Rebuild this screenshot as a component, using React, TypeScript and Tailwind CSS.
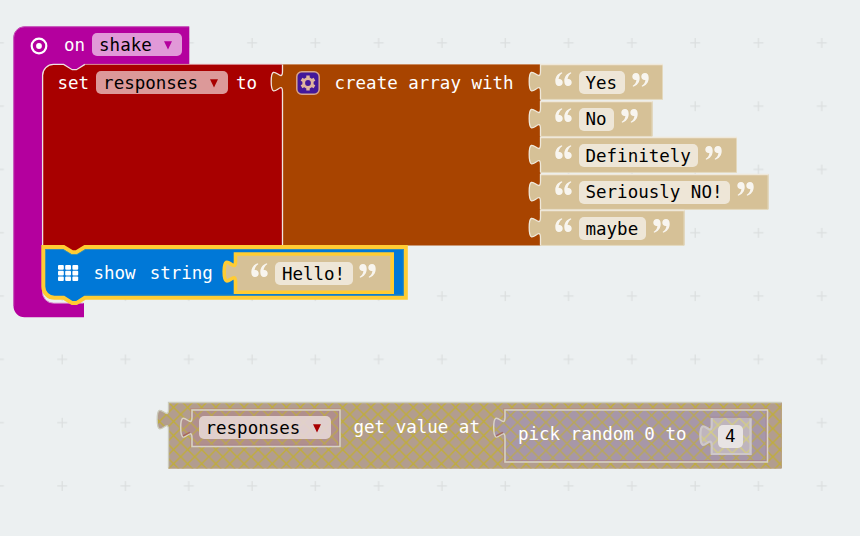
import type { ReactNode } from "react";

const TAB = "c 0,-14.1 -11.3,11.3 -11.3,-10.6 s 11.3,3.5 11.3,-10.6";
const NOTCH = "l 8.5,5.3 4.2,0 8.5,-5.3";
const NOTCH_BACK = "l -8.5,5.3 -4.2,0 -8.5,-5.3";

function Outline({ children }: { children: ReactNode }) {
  return <svg className="pointer-events-none absolute left-0 top-0 h-px w-px overflow-visible">{children}</svg>;
}

function Caret({ color }: { color: string }) {
  return (
    <svg width="10" height="9" viewBox="0 0 10 9" className="block shrink-0">
      <path d="M1 0.3 H9 L5 8.5 Z" fill={color} />
    </svg>
  );
}

function Quote({ close = false }: { close?: boolean }) {
  const d = "M7 0.3 C3 1.3 0.3 4.6 0.3 9 C0.3 12.3 1.6 14 4 14 C6.3 14 7.7 12.5 7.7 10.4 C7.7 8.3 6.3 7 4.4 7 C4.1 7 3.8 7 3.6 7.1 C3.9 4.4 5.2 2.5 7.3 1.2 Z";
  return (
    <svg width="17" height="15" viewBox="0 0 17 15" className={close ? "block shrink-0 rotate-180 opacity-85" : "block shrink-0 opacity-85"}>
      <path d={d} fill="#fff" />
      <path d={d} fill="#fff" transform="translate(9 0)" />
    </svg>
  );
}

function Field({ text, tone, caret }: { text: string; tone: string; caret?: string }) {
  return (
    <div className={`flex h-[23px] shrink-0 items-center rounded-[5px] pl-[7px] pt-px text-black ${caret ? "pr-[9px]" : "pr-[7.5px]"} ${tone}`}>
      <span>{text}</span>
      {caret && (
        <span className="ml-[11.5px]">
          <Caret color={caret} />
        </span>
      )}
    </div>
  );
}

function StringBlock({ text, width }: { text: string; width: number }) {
  return (
    <div className="relative h-[36.6px]" style={{ width }}>
      <Outline>
        <path d={`M0.5 0.3 H${width} V35.2 H0.5 V28.2 ${TAB} Z`} fill="#d6c197" />
        <path d={`M0.5 35.4 H${width - 0.5} V0.5`} fill="none" stroke="#e3d8bd" />
        <path d={`M0.5 35.2 V28.2 ${TAB} V0.5 H${width}`} fill="none" stroke="#efe8da" strokeWidth="1.3" />
      </Outline>
      <div className="relative flex items-start gap-[7px] pl-[14.5px] pt-[7.1px]">
        <span className="pt-[0.5px]"><Quote /></span>
        <Field text={text} tone="bg-[#eee6d7]" />
        <span className="pt-[0.5px]"><Quote close /></span>
      </div>
    </div>
  );
}

const answers = [
  { text: "Yes", width: 123 },
  { text: "No", width: 112.5 },
  { text: "Definitely", width: 197 },
  { text: "Seriously NO!", width: 228.5 },
  { text: "maybe", width: 144.5 },
];

function SetBlock() {
  return (
    <div className="relative flex h-[183px]">
      <Outline>
        <path d={`M0.5 182 V11.3 A11 11 0 0 1 11.5 0.3 H21.7 ${NOTCH} H240 V182 H42.9 ${NOTCH_BACK} Z`} fill="#a80000" />
        <path d={`M0.6 182 V11.3 A11 11 0 0 1 11.5 0.4 H21.7 ${NOTCH}`} fill="none" stroke="#f0dfe4" strokeWidth="1.3" />
        <path d="M43 0.4 H240" stroke="#d98a92" />
        <path d={`M21.7 180 H42.9 V183 ${NOTCH_BACK} Z`} fill="#a80000" />
      </Outline>
      <div className="relative flex w-[240px] items-start gap-[7px] pl-[15.5px] pt-[7px]">
        <span className="mt-[0.6px]">set</span>
        <Field text="responses" tone="bg-[#dc9999]" caret="#a80000" />
        <span className="ml-[0.5px] mt-[0.6px]">to</span>
      </div>
      <div className="relative w-[258px] shrink-0">
        <Outline>
          <path d={`M0.5 0.3 H258.5 V181.6 H0.5 V28.2 ${TAB} Z`} fill="#a84400" />
          <path d="M0 0.5 H258" stroke="#c98a60" />
          <path d={`M0.5 181.5 V28.2 ${TAB} V0.5`} fill="none" stroke="#f1e4de" strokeWidth="1.3" />
        </Outline>
        <div className="relative flex items-start pl-[14.5px] pt-[7px]">
          <svg width="24" height="24" viewBox="0 0 24 24" className="-ml-[0.5px] block shrink-0">
            <rect x="0.8" y="0.8" width="22.4" height="22.4" rx="5" fill="#43189a" stroke="#d8a58a" strokeWidth="1.5" />
            <circle cx="12" cy="12" r="4.3" fill="none" stroke="#dfb69f" strokeWidth="2.8" />
            <path d="M12 4.5 V7 M12 17 V19.5 M5.5 8.25 L7.7 9.5 M16.3 14.5 L18.5 15.75 M5.5 15.75 L7.7 14.5 M16.3 9.5 L18.5 8.25" stroke="#dfb69f" strokeWidth="3.4" />
          </svg>
          <span className="ml-[14.5px] mt-[0.6px]">create array with</span>
        </div>
      </div>
      <div className="flex flex-col">
        {answers.map((a) => (
          <StringBlock key={a.text} text={a.text} width={a.width} />
        ))}
      </div>
    </div>
  );
}

function ShowStringBlock() {
  return (
    <div className="relative flex h-[51px] w-[363px] items-start pl-[16px] pt-[14.5px]">
      <Outline>
        <path
          d={`M1.3 0 H21.7 ${NOTCH} H363.8 V50.8 H42.9 ${NOTCH_BACK} H12.5 A11.2 11.2 0 0 1 1.3 39.6 Z`}
          fill="#0078d7"
          stroke="#ffcc33"
          strokeWidth="4"
        />
        <path d="M3.8 2.5 H21.2 l8.3,5 5.6,0 8.3,-5 H361.3 V48.2 H43.2" fill="none" stroke="#3f93b0" strokeWidth="0.8" />
      </Outline>
      <svg width="21" height="17" viewBox="0 0 21 17" className="relative mt-[3px] block shrink-0">
        {[0, 7.2, 14.4].map((x) =>
          [0, 5.7, 11.4].map((y) => <rect key={`${x}-${y}`} x={x} y={y} width="5.8" height="4.7" rx="1" fill="#fff" />)
        )}
      </svg>
      <span className="relative ml-[14.5px]">show</span>
      <span className="relative ml-[14px]">string</span>
      <div className="relative -mt-[7.5px] ml-[22.5px] h-[38.5px] w-[157px] shrink-0">
        <Outline>
          <path d={`M0.5 0 H157.2 V38.3 H0.5 V28.2 ${TAB} Z`} fill="#d6c197" stroke="#ffcc33" strokeWidth="3.6" />
        </Outline>
        <div className="relative flex items-start gap-[6.5px] pl-[16px] pt-[8.4px]">
          <span className="pt-px"><Quote /></span>
          <Field text="Hello!" tone="bg-[#eee6d7]" />
          <span className="pt-px"><Quote close /></span>
        </div>
      </div>
    </div>
  );
}

function EventStack() {
  return (
    <div className="absolute left-[13px] top-[26px] flex flex-col">
      <Outline>
        <path
          d="M0.5 11.5 A11 11 0 0 1 11.5 0.5 H176.3 V38.3 H72 V46 H46 L40.5 38.3 A11 11 0 0 0 29.5 49.5 V265.5 A11 11 0 0 0 40.5 277 H71 V291.3 H11.5 A11 11 0 0 1 0.5 280.3 Z"
          fill="#b4009e"
        />
        <path d="M0.7 280 V11.5 A11 11 0 0 1 11.5 0.7 H176" fill="none" stroke="#c75cba" />
        <path d="M29.5 265 A11 11 0 0 0 40.5 277.2 H70.5" fill="none" stroke="#d98fd0" />
      </Outline>
      <div className="relative flex h-[38px] items-start pl-[17px] pt-[7px]">
        <svg width="18" height="18" viewBox="0 0 18 18" className="mt-[4px] block shrink-0">
          <circle cx="9" cy="9" r="7.3" fill="none" stroke="#fff" strokeWidth="2.2" />
          <circle cx="9" cy="9" r="2.9" fill="#fff" />
        </svg>
        <span className="ml-[16px] mr-[7px] mt-[0.6px]">on</span>
        <Field text="shake" tone="bg-[#e199d8]" caret="#b4009e" />
      </div>
      <div className="ml-[29px] flex flex-col">
        <SetBlock />
        <ShowStringBlock />
      </div>
    </div>
  );
}

function Raised({ width, height, fill, children, className }: { width: number; height: number; fill: string; children: ReactNode; className: string }) {
  const d = `M0 0 H${width} V${height} H0 V28.2 ${TAB} Z`;
  return (
    <div className={`relative shrink-0 ${className}`} style={{ width, height }}>
      <Outline>
        <path d={d} fill={fill} />
        <path d={d} fill="url(#hatch)" opacity="0.75" />
        <path d={`M-1.5 ${height + 1} V29 M-1.5 8 V-1.5 H${width + 1}`} fill="none" stroke="#b8877a" opacity="0.6" />
        <path d={`M1.2 ${height - 1.3} H${width - 1.3} V1`} fill="none" stroke="#a77f91" opacity="0.8" />
        <path d={d} fill="none" stroke="#d9d3c6" strokeWidth="1.5" />
        <path d="M-9 26 L-2 22.3" stroke="#a4594e" strokeWidth="1.5" opacity="0.75" />
      </Outline>
      <div className="relative">{children}</div>
    </div>
  );
}

function LooseValueBlock() {
  return (
    <div className="absolute left-[168px] top-[402px] flex h-[66px] w-[613.5px] items-start pl-[24px]">
      <Outline>
        <path d={`M0.5 0.3 H613.8 V66.5 H0.5 V28.2 ${TAB} Z`} fill="#b29d8f" />
        <path d={`M0.5 0.3 H613.8 V66.5 H0.5 V28.2 ${TAB} Z`} fill="url(#hatch)" />
        <path d={`M0.5 66 V28.2 ${TAB} V0.5 H613.5`} fill="none" stroke="#cbcbbb" strokeWidth="1.3" />
        <path d="M0.5 66 H613.3 V1" fill="none" stroke="#b9a078" />
      </Outline>
      <Raised width={148} height={36.5} fill="#b08f8d" className="mt-[8.4px]">
        <div className="flex pl-[6.5px] pt-[6.1px]">
          <Field text="responses" tone="bg-[#e6d6d5]/90" caret="#a80000" />
        </div>
      </Raised>
      <span className="relative ml-[13.5px] mt-[14px]">get value at</span>
      <Raised width={262.5} height={52} fill="#a797a8" className="ml-[25px] mt-[8.4px]">
        <div className="flex items-start pl-[13px]">
          <span className="mt-[13.1px]">pick random 0 to</span>
          <div className="relative ml-[24.5px] mt-[8px] flex h-[37px] w-[40.5px] shrink-0 pl-[7px] pt-[6.2px]">
            <Outline>
              <path d={`M0 0 H40.5 V37 H0 V28.2 ${TAB} Z`} fill="#bfb5bd" />
              <path d={`M0 0 H40.5 V37 H0 V28.2 ${TAB} Z`} fill="url(#hatchPale)" />
              <path d="M-1 -1 H41" stroke="#a68da1" />
              <path d={`M0.7 37 V28.2 ${TAB} V0 M0 36 H39.5 V0.5`} fill="none" stroke="#cec8ca" strokeWidth="2.2" />
            </Outline>
            <div className="relative">
              <Field text="4" tone="bg-[#e8e4e4]" />
            </div>
          </div>
        </div>
      </Raised>
    </div>
  );
}

export default function App() {
  return (
    <main className="relative h-[536px] w-[860px] overflow-hidden bg-[#ecf0f1] font-['DejaVu_Sans_Mono',monospace] text-[17.5px] leading-[23px] whitespace-pre text-white">
      <svg width="860" height="536" className="absolute inset-0">
        <defs>
          <pattern id="dots" x="-33" y="-52" width="63.3" height="63.3" patternUnits="userSpaceOnUse">
            <path d="M26.9 31.6 H36.9 M31.9 26.6 V36.6" stroke="#dcdfe0" strokeWidth="1.3" />
          </pattern>
          <pattern id="hatch" x="-1.5" y="-1.7" width="14.1" height="14.1" patternUnits="userSpaceOnUse">
            <path d="M-1 -1 L15.1 15.1 M15.1 -1 L-1 15.1" stroke="#c0ad3b" strokeWidth="1.4" />
          </pattern>
          <pattern id="hatchPale" width="14.1" height="14.1" patternUnits="userSpaceOnUse">
            <path d="M-1 -1 L15.1 15.1 M15.1 -1 L-1 15.1" stroke="#d3cc86" strokeWidth="1.4" />
          </pattern>
        </defs>
        <rect width="860" height="536" fill="url(#dots)" />
      </svg>
      <EventStack />
      <LooseValueBlock />
    </main>
  );
}
